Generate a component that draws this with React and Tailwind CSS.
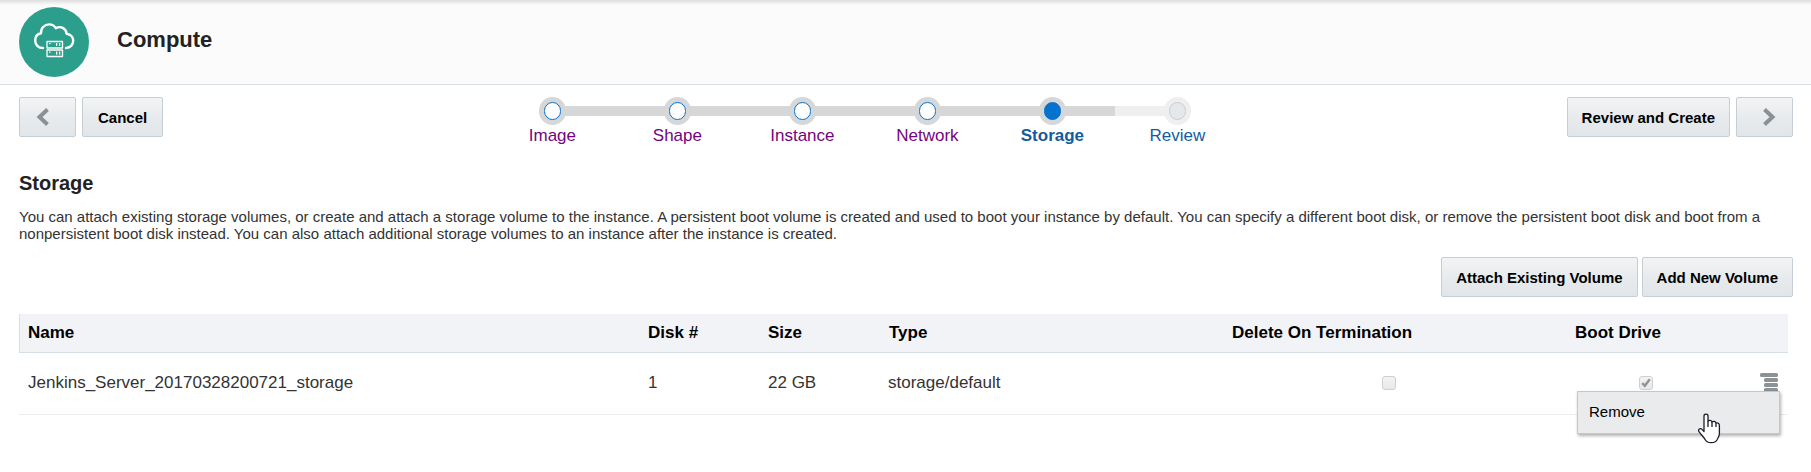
import React from "react";

const steps = [
  { label: "Image", state: "done" },
  { label: "Shape", state: "done" },
  { label: "Instance", state: "done" },
  { label: "Network", state: "done" },
  { label: "Storage", state: "current" },
  { label: "Review", state: "next" },
];

const ringStyles = {
  done: "bg-[#d6d7d9]",
  current: "bg-[#d6d7d9]",
  next: "bg-[#efeff0]",
};
const dotStyles = {
  done: "border-[#0572ce] bg-white",
  current: "border-[#0572ce] bg-[#0572ce]",
  next: "border-[#c4ced7] bg-[#e4e8ea]",
};
const labelStyles = {
  done: "text-[#75057d]",
  current: "font-bold text-[#145c9e]",
  next: "text-[#145c9e]",
};

function Button({ className = "", children, ...rest }) {
  return (
    <button
      type="button"
      className={`flex h-10 items-center rounded-xs border border-[#c4ced7] bg-linear-to-b from-[#f3f4f5] via-[#e8ebed] to-[#e3e6e9] text-[15px] font-bold text-black ${className}`}
      {...rest}
    >
      {children}
    </button>
  );
}

function Chevron({ flip }) {
  return (
    <svg width="14" height="18" viewBox="0 0 14 18" aria-hidden="true">
      <path
        d={flip ? "M2.5 1.5 L10.5 9 L2.5 16.5" : "M11.5 1.5 L3.5 9 L11.5 16.5"}
        fill="none"
        stroke="#8b9095"
        strokeWidth="4"
      />
    </svg>
  );
}

function ComputeLogo() {
  return (
    <svg width="70" height="70" viewBox="0 0 70 70" aria-hidden="true">
      <circle cx="35" cy="35" r="35" fill="#2b9f8b" />
      <g fill="none" stroke="#fff" strokeLinecap="round" strokeLinejoin="round">
        <path
          d="M24 41 C19.2 41 16.2 37.6 16.2 33.5 C16.2 29.8 18.6 27 22 26.3 C21.6 21.3 25.4 17.4 30.2 17.4 C33.2 17.4 35.4 18.8 36.8 21.2 C41.6 18.6 47 21.2 47.7 26.8 C51.6 27.3 54.2 30.2 54.2 33.8 C54.2 37.8 51.2 41 47 41"
          strokeWidth="2.4"
        />
        <rect x="28" y="34.5" width="15.5" height="6.5" strokeWidth="1.3" />
        <rect x="28" y="43" width="15.5" height="6.5" strokeWidth="1.3" />
      </g>
      <g fill="#fff">
        <rect x="30" y="36" width="1.5" height="1.2" />
        <rect x="37" y="36" width="1.3" height="3" />
        <rect x="40" y="36" width="1.3" height="3" />
        <rect x="30" y="44.6" width="1.5" height="1.2" />
        <rect x="37" y="44.6" width="1.3" height="3" />
        <rect x="40" y="44.6" width="1.3" height="3" />
      </g>
    </svg>
  );
}

function Check({ label, checked }) {
  return (
    <span className="mx-auto grid size-[14px] place-items-center">
      <input
        type="checkbox"
        aria-label={label}
        defaultChecked={checked}
        disabled
        className="col-start-1 row-start-1 size-[14px] appearance-none rounded-[3px] border border-[#cfcfcf] bg-linear-to-b from-[#f3f3f3] to-[#e9e9e9]"
      />
      {checked && (
        <svg className="col-start-1 row-start-1" width="10" height="10" viewBox="0 0 10 10" aria-hidden="true">
          <path d="M1.2 5.2 L3.8 7.8 L8.8 1.2" fill="none" stroke="#949494" strokeWidth="2.5" />
        </svg>
      )}
    </span>
  );
}

function HandCursor() {
  return (
    <svg width="24" height="31" viewBox="0 0 24 31" className="absolute top-[21px] right-[58px]" aria-hidden="true">
      <path
        d="M7 18.5 V3 C7 .6 11 .6 11 3 V8.5 C12 6.8 14.6 7.2 15 9 C16.4 7.8 18.6 8.4 19 10.2 C20.6 9.4 22.4 10.4 22.4 12.4 V20.5 C22.4 23.5 20.6 25 20 27 C18 30.6 10.4 30.6 8.4 27 C7 24.4 4.4 22 2 18.6 C.6 16.2 3.4 14.6 5 16.4 Z"
        fill="#fff"
        stroke="#1c1c2c"
        strokeWidth="1.3"
        strokeLinejoin="round"
      />
      <path d="M11 8.5 V14 M15 9 V14 M19 10.2 V14" fill="none" stroke="#1c1c2c" strokeWidth="1.3" />
    </svg>
  );
}

function Stepper() {
  return (
    <ol className="flex">
      {steps.map(({ label, state }, i) => {
        const last = i === steps.length - 1;
        return (
          <li key={label} className="w-[125px]">
            <a href={`#${label.toLowerCase()}`} aria-current={state === "current" ? "step" : undefined} className="block text-center">
              <span className="flex items-center">
                <span className={`h-[10px] flex-1 ${i === 0 ? "" : last ? "bg-[#efeff0]" : "bg-[#d6d7d9]"}`} />
                <span className={`-mx-px grid h-7 w-[27px] place-items-center rounded-full ${ringStyles[state]}`}>
                  <span className={`h-[18px] w-[17px] rounded-full border ${dotStyles[state]}`} />
                </span>
                <span className={`h-[10px] flex-1 ${last ? "" : "bg-[#d6d7d9]"}`} />
              </span>
              <span className={`block text-[17px] leading-[21px] ${labelStyles[state]}`}>{label}</span>
            </a>
          </li>
        );
      })}
    </ol>
  );
}

export default function App() {
  return (
    <div className="min-h-screen bg-white font-['Liberation_Sans',Arial,sans-serif] text-[#333]">
      <header className="border-b border-[#d6dfe6] bg-[#fbfbfb]">
        <div className="h-[5px] bg-linear-to-b from-[#dedede] to-[#fbfbfb]" />
        <div className="flex items-start gap-7 px-[19px] pt-0.5 pb-[7px]">
          <ComputeLogo />
          <h1 className="pt-[19px] text-[22px] leading-7 font-bold text-[#222]">Compute</h1>
        </div>
      </header>

      <main className="pt-3 pr-[18px] pb-8 pl-[19px]">
        <nav className="flex items-start justify-between" aria-label="Create instance">
          <div className="flex gap-1.5">
            <Button aria-label="Back" className="w-[57px] pl-4"><Chevron /></Button>
            <Button className="px-[15px] pt-0.5">Cancel</Button>
          </div>
          <Stepper />
          <div className="flex gap-1.5">
            <Button className="px-[14px] pt-0.5">Review and Create</Button>
            <Button aria-label="Next" className="w-[57px] justify-end pr-4"><Chevron flip /></Button>
          </div>
        </nav>

        <h2 className="mt-[25px] text-xl leading-6 font-bold text-[#222]">Storage</h2>
        <p className="mt-[13px] text-[15px] leading-[17px]">
          You can attach existing storage volumes, or create and attach a storage volume to the instance. A persistent
          boot volume is created and used to boot your instance by default. You can specify a different boot disk, or
          remove the persistent boot disk and boot from a nonpersistent boot disk instead. You can also attach
          additional storage volumes to an instance after the instance is created.
        </p>

        <div className="mt-[15px] flex justify-end gap-1">
          <Button className="px-[14px] pt-0.5">Attach Existing Volume</Button>
          <Button className="px-[14px] pt-0.5">Add New Volume</Button>
        </div>

        <div className="mt-[17px] pr-[5px]">
          <table className="w-full table-fixed border-separate border-spacing-0 text-left text-[17px]">
            <colgroup>
              <col />
              <col className="w-[120px]" />
              <col className="w-[120px]" />
              <col className="w-[343px]" />
              <col className="w-[343px]" />
              <col className="w-[160px]" />
              <col className="w-[62px]" />
            </colgroup>
            <thead>
              <tr className="h-[39px] bg-[#f2f3f7] text-black *:border-b *:border-[#d6dfe6]">
                <th scope="col" className="border-l px-2">Name</th>
                <th scope="col" className="px-2">Disk #</th>
                <th scope="col" className="px-2">Size</th>
                <th scope="col" className="px-[9px]">Type</th>
                <th scope="col" className="px-[9px]">Delete On Termination</th>
                <th scope="col" className="px-[9px]">Boot Drive</th>
                <td />
              </tr>
            </thead>
            <tbody>
              <tr className="h-[62px] *:border-b *:border-[#ececec] *:pb-0.5">
                <td className="px-[9px]">Jenkins_Server_20170328200721_storage</td>
                <td className="px-2">1</td>
                <td className="px-2">22 GB</td>
                <td className="px-2">storage/default</td>
                <td className="pr-3"><Check label="Delete on termination" /></td>
                <td><Check label="Boot drive" checked /></td>
                <td>
                  <div className="relative flex justify-end pr-[10px]">
                    <button type="button" aria-label="Row actions" aria-expanded="true">
                      <svg width="18" height="20" viewBox="0 0 18 20" className="block" aria-hidden="true">
                        <g fill="#8b9195">
                          <rect x="0" y="0" width="18" height="4" rx="1.5" />
                          <rect x="4" y="5" width="14" height="4" rx="1.5" />
                          <rect x="4" y="10" width="14" height="4" rx="1.5" />
                          <rect x="4" y="15" width="14" height="4" rx="1.5" />
                        </g>
                      </svg>
                    </button>
                    <div role="menu" className="absolute top-[18px] right-2 w-[203px] border border-[#bccad5] bg-[#e9ebed] shadow-[1px_2px_3px_rgba(0,0,0,0.3)]">
                      <button type="button" role="menuitem" className="block h-[41px] w-full px-[11px] text-left text-[15px] text-black">
                        Remove
                      </button>
                      <HandCursor />
                    </div>
                  </div>
                </td>
              </tr>
            </tbody>
          </table>
        </div>
      </main>
    </div>
  );
}
